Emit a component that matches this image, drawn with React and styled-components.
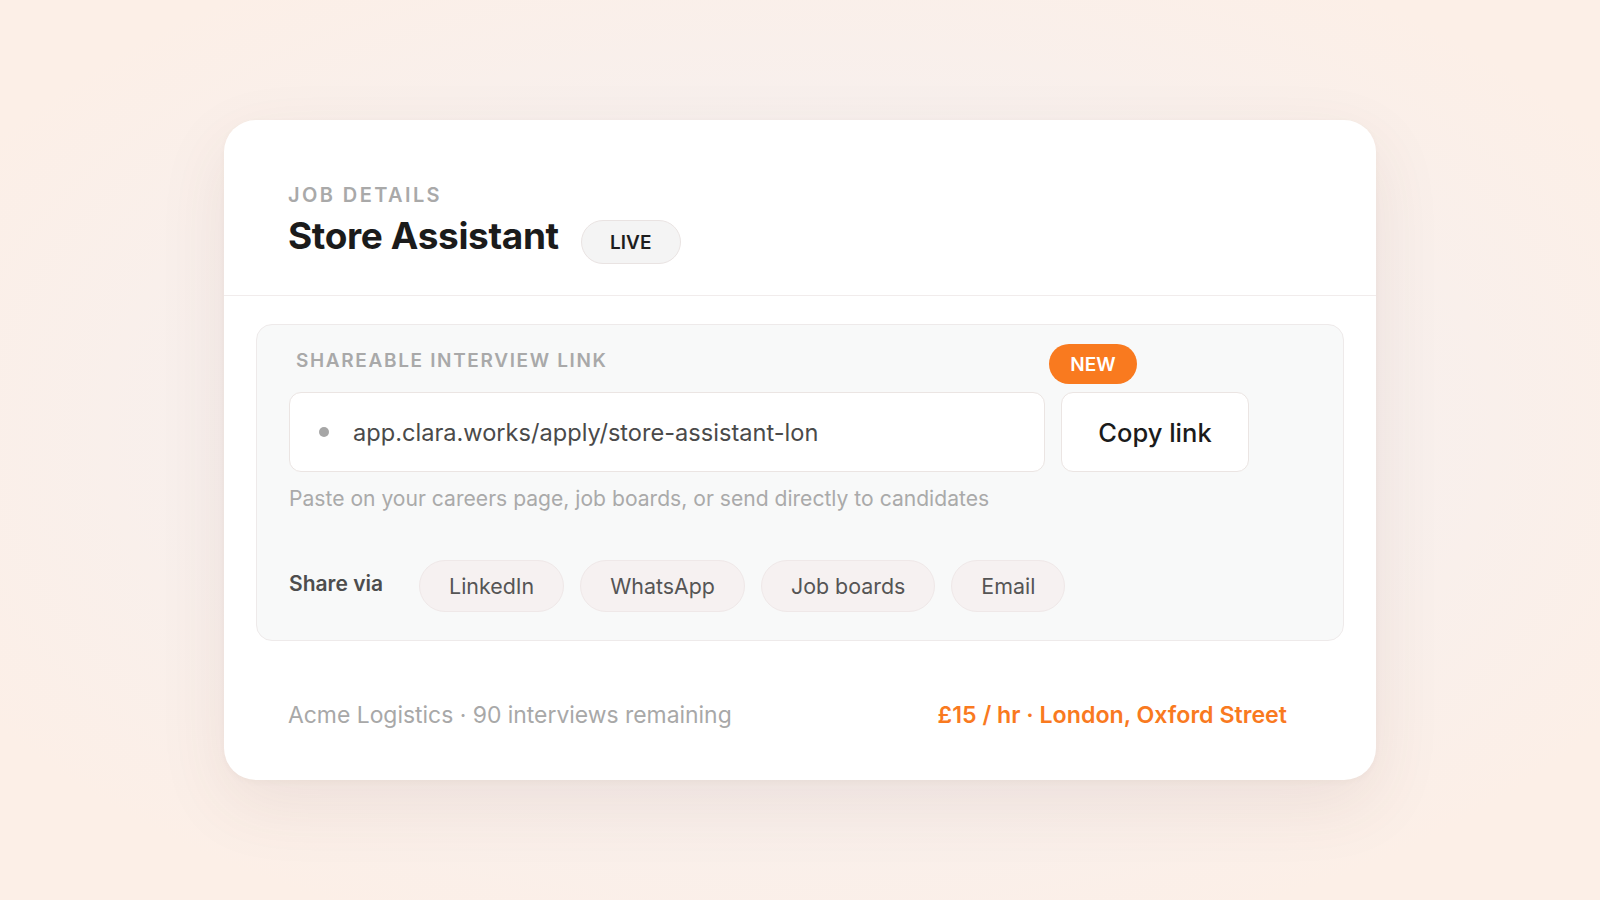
import React from 'react'
import styled, { createGlobalStyle } from 'styled-components'

const GlobalStyle = createGlobalStyle`
  * { box-sizing: border-box; }
  html, body { margin: 0; padding: 0; }
  body {
    font-family: Inter, "Noto Sans", sans-serif;
    background: #fcefe8;
  }
`

const Page = styled.div`
  width: 100%;
  height: 900px;
  display: flex;
  align-items: center;
  justify-content: center;
  background: radial-gradient(ellipse 60% 60% at 50% 48%, #f4efef 0%, #f6f0ef 45%, #fcefe7 100%);
`

const Card = styled.div`
  width: 1152px;
  height: 660px;
  background: #fff;
  border-radius: 32px;
  box-shadow: 0 24px 70px rgba(110, 70, 60, 0.09), 0 2px 6px rgba(110, 70, 60, 0.04);
  display: flex;
  flex-direction: column;
  overflow: hidden;
`

const Header = styled.div`
  height: 176px;
  padding: 63px 64px 0;
  border-bottom: 1.5px solid #f1ecec;
`

const Eyebrow = styled.div`
  font-size: ${p => p.size || 20}px;
  line-height: 24px;
  font-weight: 600;
  letter-spacing: ${p => p.spacing || '0.12em'};
  text-transform: uppercase;
  color: #a9a9a9;
  padding-left: ${p => p.indent || 0}px;
`

const TitleRow = styled.div`
  display: flex;
  align-items: flex-start;
  gap: 22px;
  margin-top: 7px;
`

const Title = styled.h1`
  margin: 0;
  font-size: 37px;
  line-height: 44px;
  font-weight: 700;
  letter-spacing: -0.01em;
  color: #1b1b1b;
`

const Pill = styled.span`
  margin-top: 6px;
  width: 100px;
  height: 44px;
  border-radius: 22px;
  border: 1.5px solid #e9e3e2;
  background: #f4f4f4;
  display: flex;
  align-items: center;
  justify-content: center;
  font-size: 19px;
  font-weight: 600;
  color: #1d1d1d;
`

const Panel = styled.section`
  margin: 28px 32px 0;
  padding: 24px 32px 28px;
  background: #f8f9f9;
  border: 1.5px solid #eeeaea;
  border-radius: 16px;
`

const LinkRow = styled.div`
  display: flex;
  gap: 16px;
  margin-top: 19px;
`

const LinkField = styled.div`
  width: 756px;
  height: 80px;
  background: #fff;
  border: 1.5px solid #ebe5e3;
  border-radius: 12px;
  display: flex;
  align-items: center;
  gap: 24px;
  padding-left: 29px;
  font-size: 23.6px;
  color: #4a4a4a;
`

const Dot = styled.span`
  width: 10px;
  height: 10px;
  border-radius: 50%;
  background: #a6a6a6;
`

const CopyWrap = styled.div`
  position: relative;
`

const CopyButton = styled.button`
  width: 188px;
  height: 80px;
  background: #fff;
  border: 1.5px solid #ebe5e3;
  border-radius: 12px;
  font-family: inherit;
  font-size: 25.5px;
  font-weight: 500;
  color: #1b1b1b;
  cursor: pointer;
`

const NewBadge = styled.span`
  position: absolute;
  top: -48px;
  left: -12px;
  width: 88px;
  height: 40px;
  border-radius: 20px;
  background: #f97a1f;
  color: #fff;
  font-size: 19px;
  font-weight: 600;
  display: flex;
  align-items: center;
  justify-content: center;
`

const Hint = styled.p`
  margin: 13px 0 0;
  font-size: 21.1px;
  line-height: 28px;
  color: #aaaaaa;
`

const ShareRow = styled.div`
  display: flex;
  align-items: center;
  margin-top: 47px;
`

const ShareLabel = styled.span`
  font-size: 21px;
  font-weight: 600;
  color: #4d4d4d;
  margin-right: 36px;
  margin-top: -6px;
`

const Chips = styled.div`
  display: flex;
  gap: 16px;
`

const Chip = styled.button`
  height: 52px;
  padding: 0 29px;
  border-radius: 26px;
  background: #f6f1f1;
  border: 1.5px solid #efe8e8;
  font-family: inherit;
  font-size: 21.4px;
  color: #555;
  cursor: pointer;
`

const Footer = styled.div`
  flex: 1;
  display: flex;
  align-items: center;
  justify-content: space-between;
  padding: 8px 89px 0 64px;
`

const Meta = styled.span`
  font-size: ${p => (p.accent ? 23.2 : 22.9)}px;
  color: ${p => (p.accent ? '#f97a1f' : '#a8a8a8')};
  font-weight: ${p => (p.accent ? 600 : 400)};
`

const channels = ['LinkedIn', 'WhatsApp', 'Job boards', 'Email']

export default function App() {
  return (
    <>
      <GlobalStyle />
      <Page>
        <Card>
          <Header>
            <Eyebrow>Job details</Eyebrow>
            <TitleRow>
              <Title>Store Assistant</Title>
              <Pill>LIVE</Pill>
            </TitleRow>
          </Header>

          <Panel>
            <Eyebrow size={19} spacing="0.087em" indent={7}>Shareable interview link</Eyebrow>
            <LinkRow>
              <LinkField>
                <Dot />
                app.clara.works/apply/store-assistant-lon
              </LinkField>
              <CopyWrap>
                <NewBadge>NEW</NewBadge>
                <CopyButton>Copy link</CopyButton>
              </CopyWrap>
            </LinkRow>
            <Hint>Paste on your careers page, job boards, or send directly to candidates</Hint>
            <ShareRow>
              <ShareLabel>Share via</ShareLabel>
              <Chips>
                {channels.map(c => (
                  <Chip key={c}>{c}</Chip>
                ))}
              </Chips>
            </ShareRow>
          </Panel>

          <Footer>
            <Meta>Acme Logistics · 90 interviews remaining</Meta>
            <Meta accent>£15 / hr · London, Oxford Street</Meta>
          </Footer>
        </Card>
      </Page>
    </>
  )
}
